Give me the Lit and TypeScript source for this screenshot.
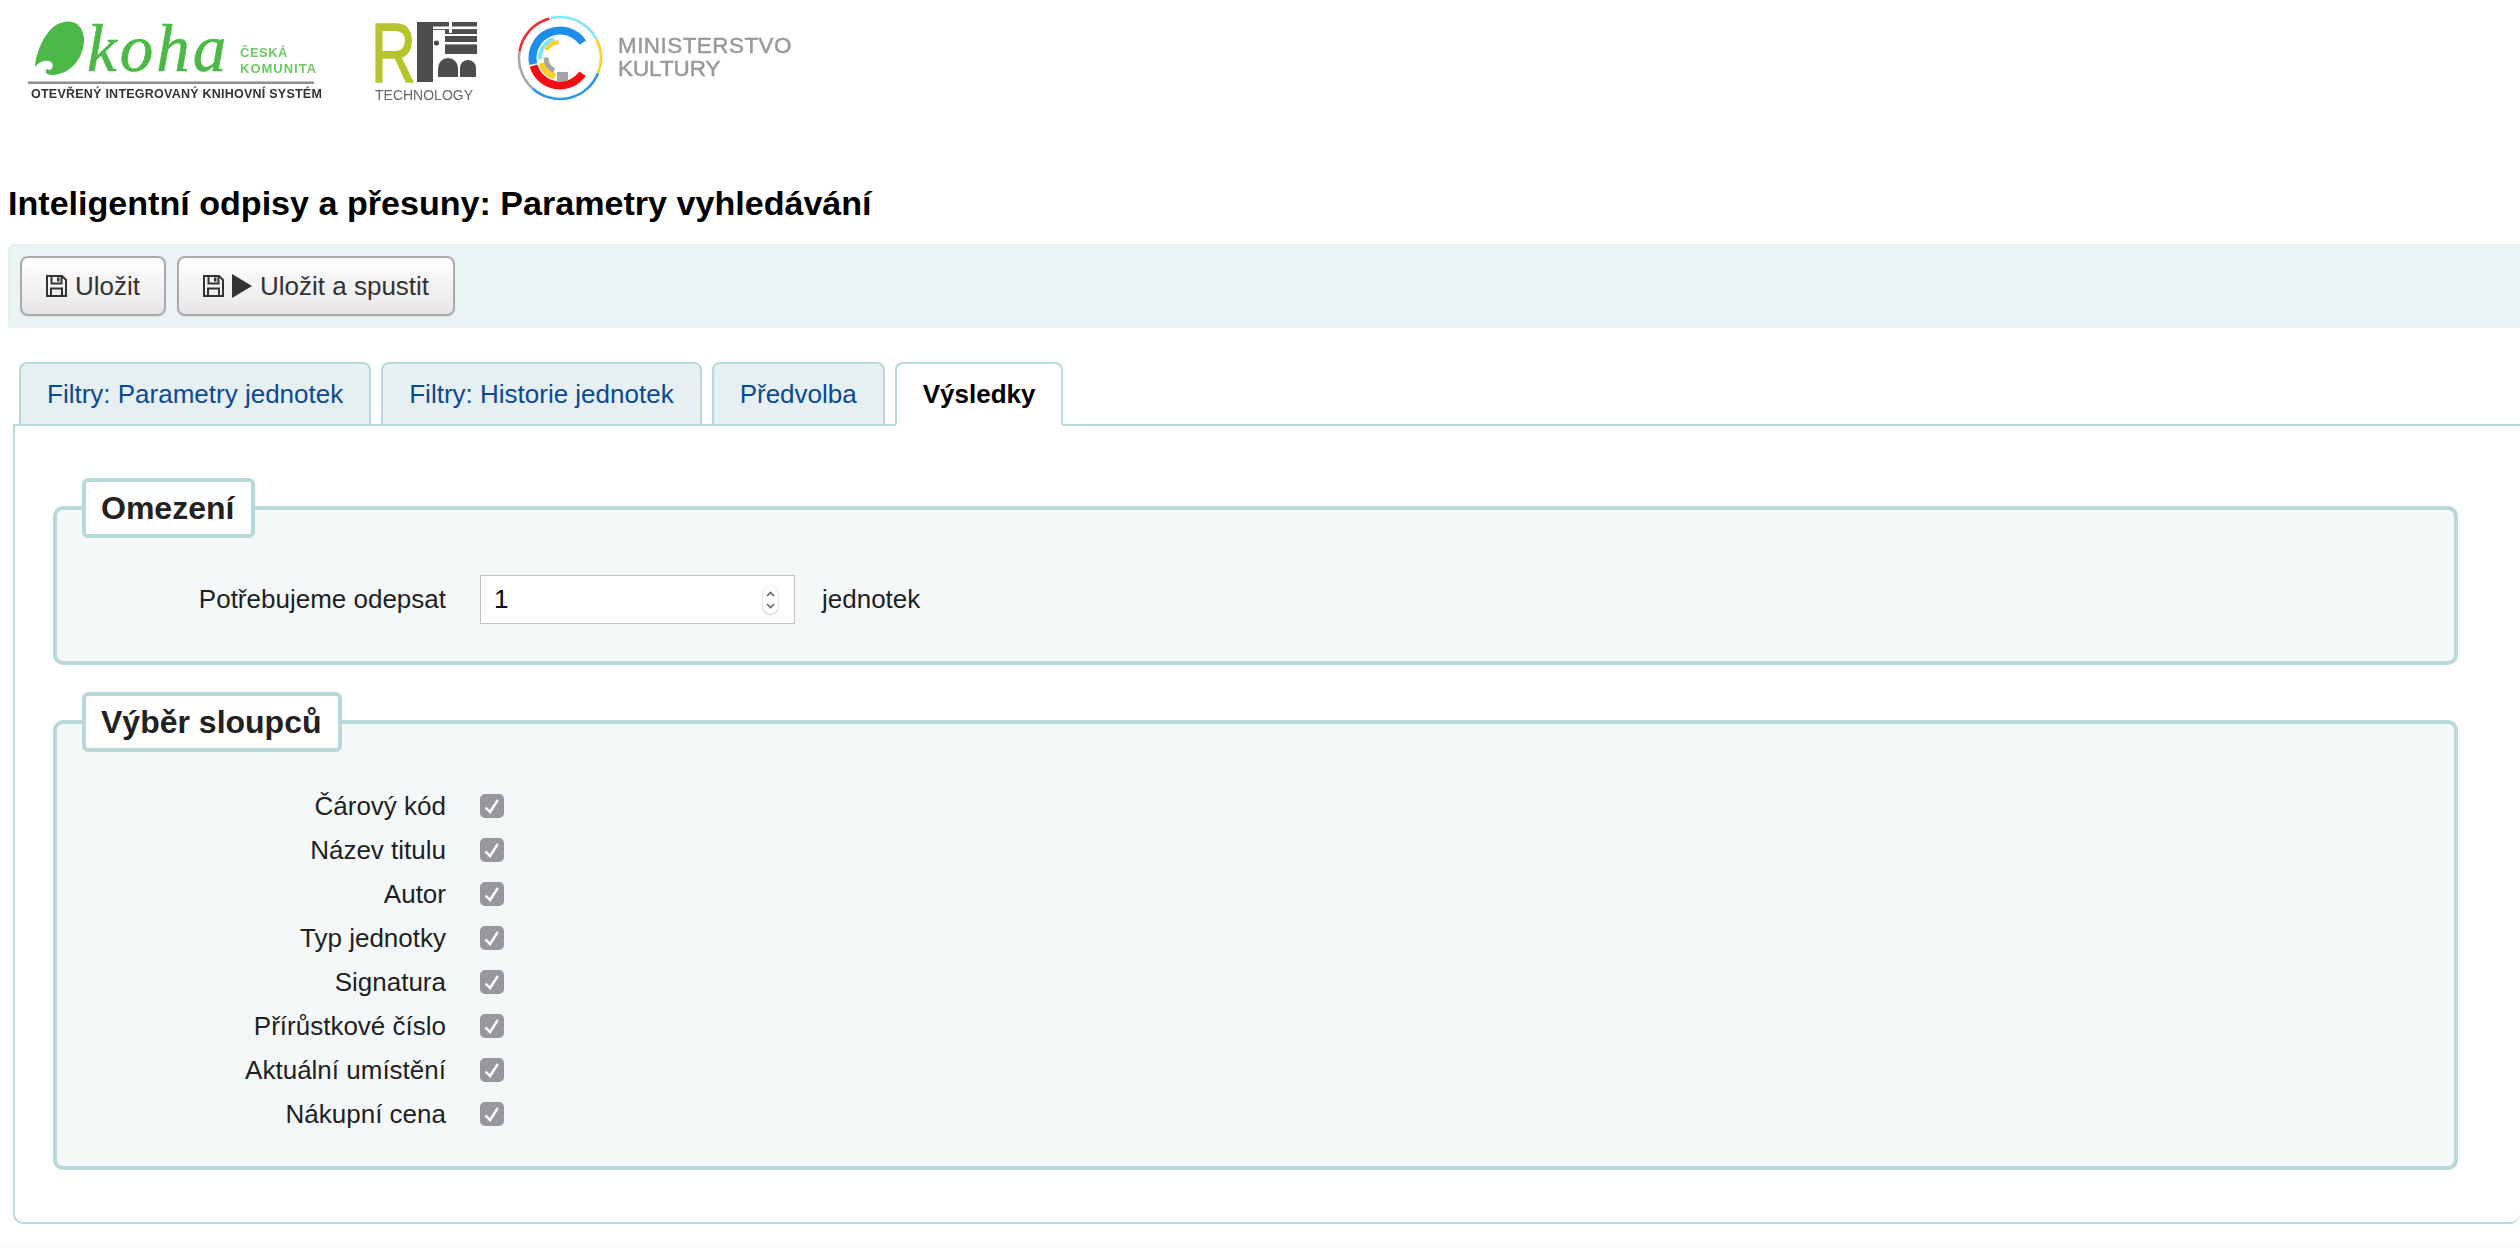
import { LitElement, html, css, svg } from "lit";
import { customElement } from "lit/decorators.js";

const CX = 560;
const CY = 58;
function arc(r: number, a0: number, a1: number): string {
  const p = (a: number) => {
    const t = (a * Math.PI) / 180;
    return `${(CX + r * Math.sin(t)).toFixed(2)} ${(CY - r * Math.cos(t)).toFixed(2)}`;
  };
  const large = a1 - a0 > 180 ? 1 : 0;
  return `M${p(a0)} A${r} ${r} 0 ${large} 1 ${p(a1)}`;
}

const RINGS: [number, number, number, number, string][] = [
  [41, 279, 345, 2.6, "#ee2a33"],
  [41, 347, 423, 2.6, "#7fe6f6"],
  [41, 63, 112, 2.6, "#ffcf2e"],
  [41, 112, 222, 2.6, "#2a98ea"],
  [41, 222, 279, 2.6, "#a8a8a8"],
  [27.5, 257, 416, 8, "#1e8fe8"],
  [27.5, 125, 254, 8, "#f20d13"],
  [20, 266, 343, 4, "#7fe6f6"],
  [16, 300, 355, 4, "#ffcc22"],
  [19, 195, 255, 6, "#ffcc22"],
  [14, 205, 272, 5, "#a4a4a4"],
];

const LABELS = [
  "Čárový kód",
  "Název titulu",
  "Autor",
  "Typ jednotky",
  "Signatura",
  "Přírůstkové číslo",
  "Aktuální umístění",
  "Nákupní cena",
];

const saveIcon = svg`<svg class="ico" viewBox="0 0 21 22" width="21" height="22" fill="none" stroke="#333" stroke-width="2">
  <path d="M1 1H16L20 5V21H1Z" />
  <path d="M5.500 1V8.500H15.500V1" />
  <path d="M5 21V13.500H16V21" />
  <rect x="11" y="2.500" width="2.500" height="4" fill="#333" stroke="none" />
</svg>`;

@customElement("app-root")
export class AppRoot extends LitElement {
  static styles = css`
    :host {
      display: block;
      height: 1248px;
      overflow: hidden;
      background: #fff;
      color: #1f1f1f;
      font-family: "Liberation Sans", Arial, sans-serif;
      font-size: 26px;
    }
    .logos {
      height: 180px;
      box-sizing: border-box;
      padding: 10px 0 0 28px;
      display: flex;
      align-items: flex-start;
      gap: 50px;
    }
    .logos svg {
      display: block;
      filter: blur(0.55px);
      font-family: "Liberation Sans", Arial, sans-serif;
    }
    .logos .mk {
      margin-left: -11px;
    }
    h1 {
      margin: 0 0 18px 8px;
      font-size: 34.1px;
      line-height: 46px;
      font-weight: 700;
      color: #000;
    }
    .toolbar {
      margin-left: 8px;
      height: 84px;
      box-sizing: border-box;
      padding: 11px;
      display: flex;
      gap: 11px;
      background: #ebf3f5;
      border: 1px solid #e6eeef;
      border-right: 0;
      border-radius: 6px 0 0 0;
    }
    .btn {
      height: 60px;
      box-sizing: border-box;
      display: flex;
      align-items: center;
      padding: 0 24px;
      gap: 8px;
      border: 2px solid #a9abab;
      border-radius: 8px;
      background: linear-gradient(#ffffff, #e6e6e6);
      box-shadow: 0 1px 1px rgba(0, 0, 0, 0.08);
      color: #333;
      white-space: nowrap;
    }
    .ico {
      display: block;
      flex: none;
    }
    .tabs {
      margin: 34px 0 -2px 19px;
      display: flex;
      gap: 10px;
      position: relative;
      z-index: 1;
    }
    .tab {
      height: 64px;
      box-sizing: border-box;
      padding: 0 26px;
      display: flex;
      align-items: center;
      border: 2px solid #b9d8d9;
      border-radius: 8px 8px 0 0;
      background: #e6eff1;
      color: #0a4a94;
      white-space: nowrap;
    }
    .tab.active {
      background: #fff;
      border-bottom-color: #fff;
      font-weight: 700;
      color: #000;
    }
    .panel {
      margin-left: 13px;
      height: 800px;
      box-sizing: border-box;
      padding: 52px 62px 0 38px;
      border: 2px solid #b9d8d9;
      border-right: 0;
      border-radius: 0 0 10px 10px;
      background: #fff;
    }
    fieldset {
      margin: 0 0 27px;
      padding: 0 26px;
      min-width: 0;
      border: 4px solid #b9d8d9;
      border-radius: 10px;
      background: #f4f8f9;
    }
    fieldset.cols {
      padding-bottom: 30px;
    }
    legend {
      box-sizing: border-box;
      height: 60px;
      margin-left: -1px;
      padding: 0 16.5px 0 15px;
      line-height: 53px;
      font-size: 32px;
      font-weight: 700;
      color: #222;
      background: #fff;
      border: 4px solid #b9d8d9;
      border-radius: 6px;
    }
    .row {
      display: grid;
      grid-template-columns: 363px auto 1fr;
      column-gap: 34px;
      align-items: center;
    }
    .limit {
      padding: 37px 0;
    }
    .lab {
      text-align: right;
      white-space: nowrap;
    }
    .num {
      width: 315px;
      height: 49px;
      box-sizing: border-box;
      border: 1.5px solid #c2c2c2;
      background: #fff;
      display: flex;
      align-items: center;
      justify-content: space-between;
      padding: 0 16px 0 13px;
      color: #000;
    }
    .spin {
      display: block;
      width: 15px;
      height: 28px;
      box-sizing: border-box;
      background: #fff;
      border-radius: 8px;
      box-shadow: 0 0.5px 2px rgba(0, 0, 0, 0.35);
    }
    .unit {
      margin-left: -7px;
    }
    .cols .list {
      padding-top: 32px;
    }
    .cols .row {
      height: 44px;
    }
    .check {
      display: block;
      width: 24px;
      height: 24px;
      border-radius: 5px;
      background: #98989c;
    }
    .foot {
      height: 10px;
      margin-top: 14px;
      background: linear-gradient(#ffffff, #f7f7f7);
    }
  `;

  private kohaLogo() {
    return svg`<svg width="297" height="100" viewBox="28 10 297 100">
      <path fill="#4cb848" d="M35 67C36 50 46 30 58 24C68 19 82 20 84 38C85 55 72 75 52 75C46 75 44 71 47 69C51 72 54 67 52 63C49 59 40 60 35 67Z" />
      <text x="87" y="71" font-family="Liberation Serif" font-style="italic" font-size="67" letter-spacing="3" fill="#4cb848" stroke="#4cb848" stroke-width="0.6">koha</text>
      <text x="240" y="57" font-size="13" font-weight="700" letter-spacing="0.500" fill="#6cc865">ČESKÁ</text>
      <text x="240" y="73" font-size="13" font-weight="700" letter-spacing="1" fill="#6cc865">KOMUNITA</text>
      <rect x="28" y="81.500" width="286" height="2.400" fill="#8a8a8a" />
      <text x="31" y="98" font-size="12.500" font-weight="700" letter-spacing="0.240" fill="#333">OTEVŘENÝ INTEGROVANÝ KNIHOVNÍ SYSTÉM</text>
    </svg>`;
  }

  private rbLogo() {
    return svg`<svg width="102" height="100" viewBox="375 10 102 100">
      <text transform="translate(371 82) scale(0.74 1)" font-size="84" fill="#b5c52c" stroke="#b5c52c" stroke-width="1.600">R</text>
      <rect x="417" y="22" width="60" height="60" fill="#4d4d4f" />
      <rect x="433" y="30" width="12" height="26" fill="#fff" />
      <circle cx="436.500" cy="43" r="2.600" fill="#4d4d4f" />
      <rect x="433" y="26.500" width="44" height="2.600" fill="#fff" />
      <rect x="449" y="22" width="3" height="11" fill="#fff" />
      <rect x="445" y="34" width="32" height="2" fill="#fff" />
      <rect x="445" y="42" width="32" height="2.400" fill="#fff" />
      <rect x="433" y="54" width="44" height="28" fill="#fff" />
      <path fill="#4d4d4f" d="M438 77V68a10 10 0 0 1 20 0V77Z" />
      <path fill="#4d4d4f" d="M460 77V68a8 8 0 0 1 16 0V77Z" />
      <text x="375" y="100" font-size="14" fill="#666">TECHNOLOGY</text>
    </svg>`;
  }

  private mkLogo() {
    return svg`<svg class="mk" width="280" height="100" viewBox="516 10 280 100">
      ${RINGS.map(
        ([r, a0, a1, w, c]) =>
          svg`<path d=${arc(r, a0, a1)} fill="none" stroke=${c} stroke-width=${w} />`
      )}
      <rect x="557" y="72" width="11" height="9" fill="#a4a4a4" />
      <text x="618" y="53" font-size="22.400" letter-spacing="0.500" fill="#999" stroke="#999" stroke-width="0.500">MINISTERSTVO</text>
      <text x="618" y="76" font-size="22.400" fill="#999" stroke="#999" stroke-width="0.500">KULTURY</text>
    </svg>`;
  }

  render() {
    return html`
      <div class="logos">${this.kohaLogo()}${this.rbLogo()}${this.mkLogo()}</div>
      <h1>Inteligentní odpisy a přesuny: Parametry vyhledávání</h1>
      <div class="toolbar">
        <div class="btn">${saveIcon}<span>Uložit</span></div>
        <div class="btn">
          ${saveIcon}
          <svg class="ico" viewBox="0 0 20 24" width="20" height="24"><path d="M0 0L20 12L0 24Z" fill="#333" /></svg>
          <span>Uložit a spustit</span>
        </div>
      </div>
      <div class="tabs">
        <div class="tab">Filtry: Parametry jednotek</div>
        <div class="tab">Filtry: Historie jednotek</div>
        <div class="tab">Předvolba</div>
        <div class="tab active">Výsledky</div>
      </div>
      <div class="panel">
        <fieldset>
          <legend>Omezení</legend>
          <div class="row limit">
            <span class="lab">Potřebujeme odepsat</span>
            <div class="num">
              <span>1</span>
              <svg class="spin" viewBox="0 0 15 28" fill="none" stroke="#666" stroke-width="1.600">
                <path d="M4 10L7.500 6.500L11 10" />
                <path d="M4 18L7.500 21.500L11 18" />
              </svg>
            </div>
            <span class="unit">jednotek</span>
          </div>
        </fieldset>
        <fieldset class="cols">
          <legend>Výběr sloupců</legend>
          <div class="list">
            ${LABELS.map(
              (l) => html`<div class="row">
                <span class="lab">${l}</span>
                <svg class="check" viewBox="0 0 24 24" fill="none" stroke="#fff" stroke-width="2.400">
                  <path d="M5.500 13.500L10 18L17.800 6" />
                </svg>
                <span></span>
              </div>`
            )}
          </div>
        </fieldset>
      </div>
      <div class="foot"></div>
    `;
  }
}
